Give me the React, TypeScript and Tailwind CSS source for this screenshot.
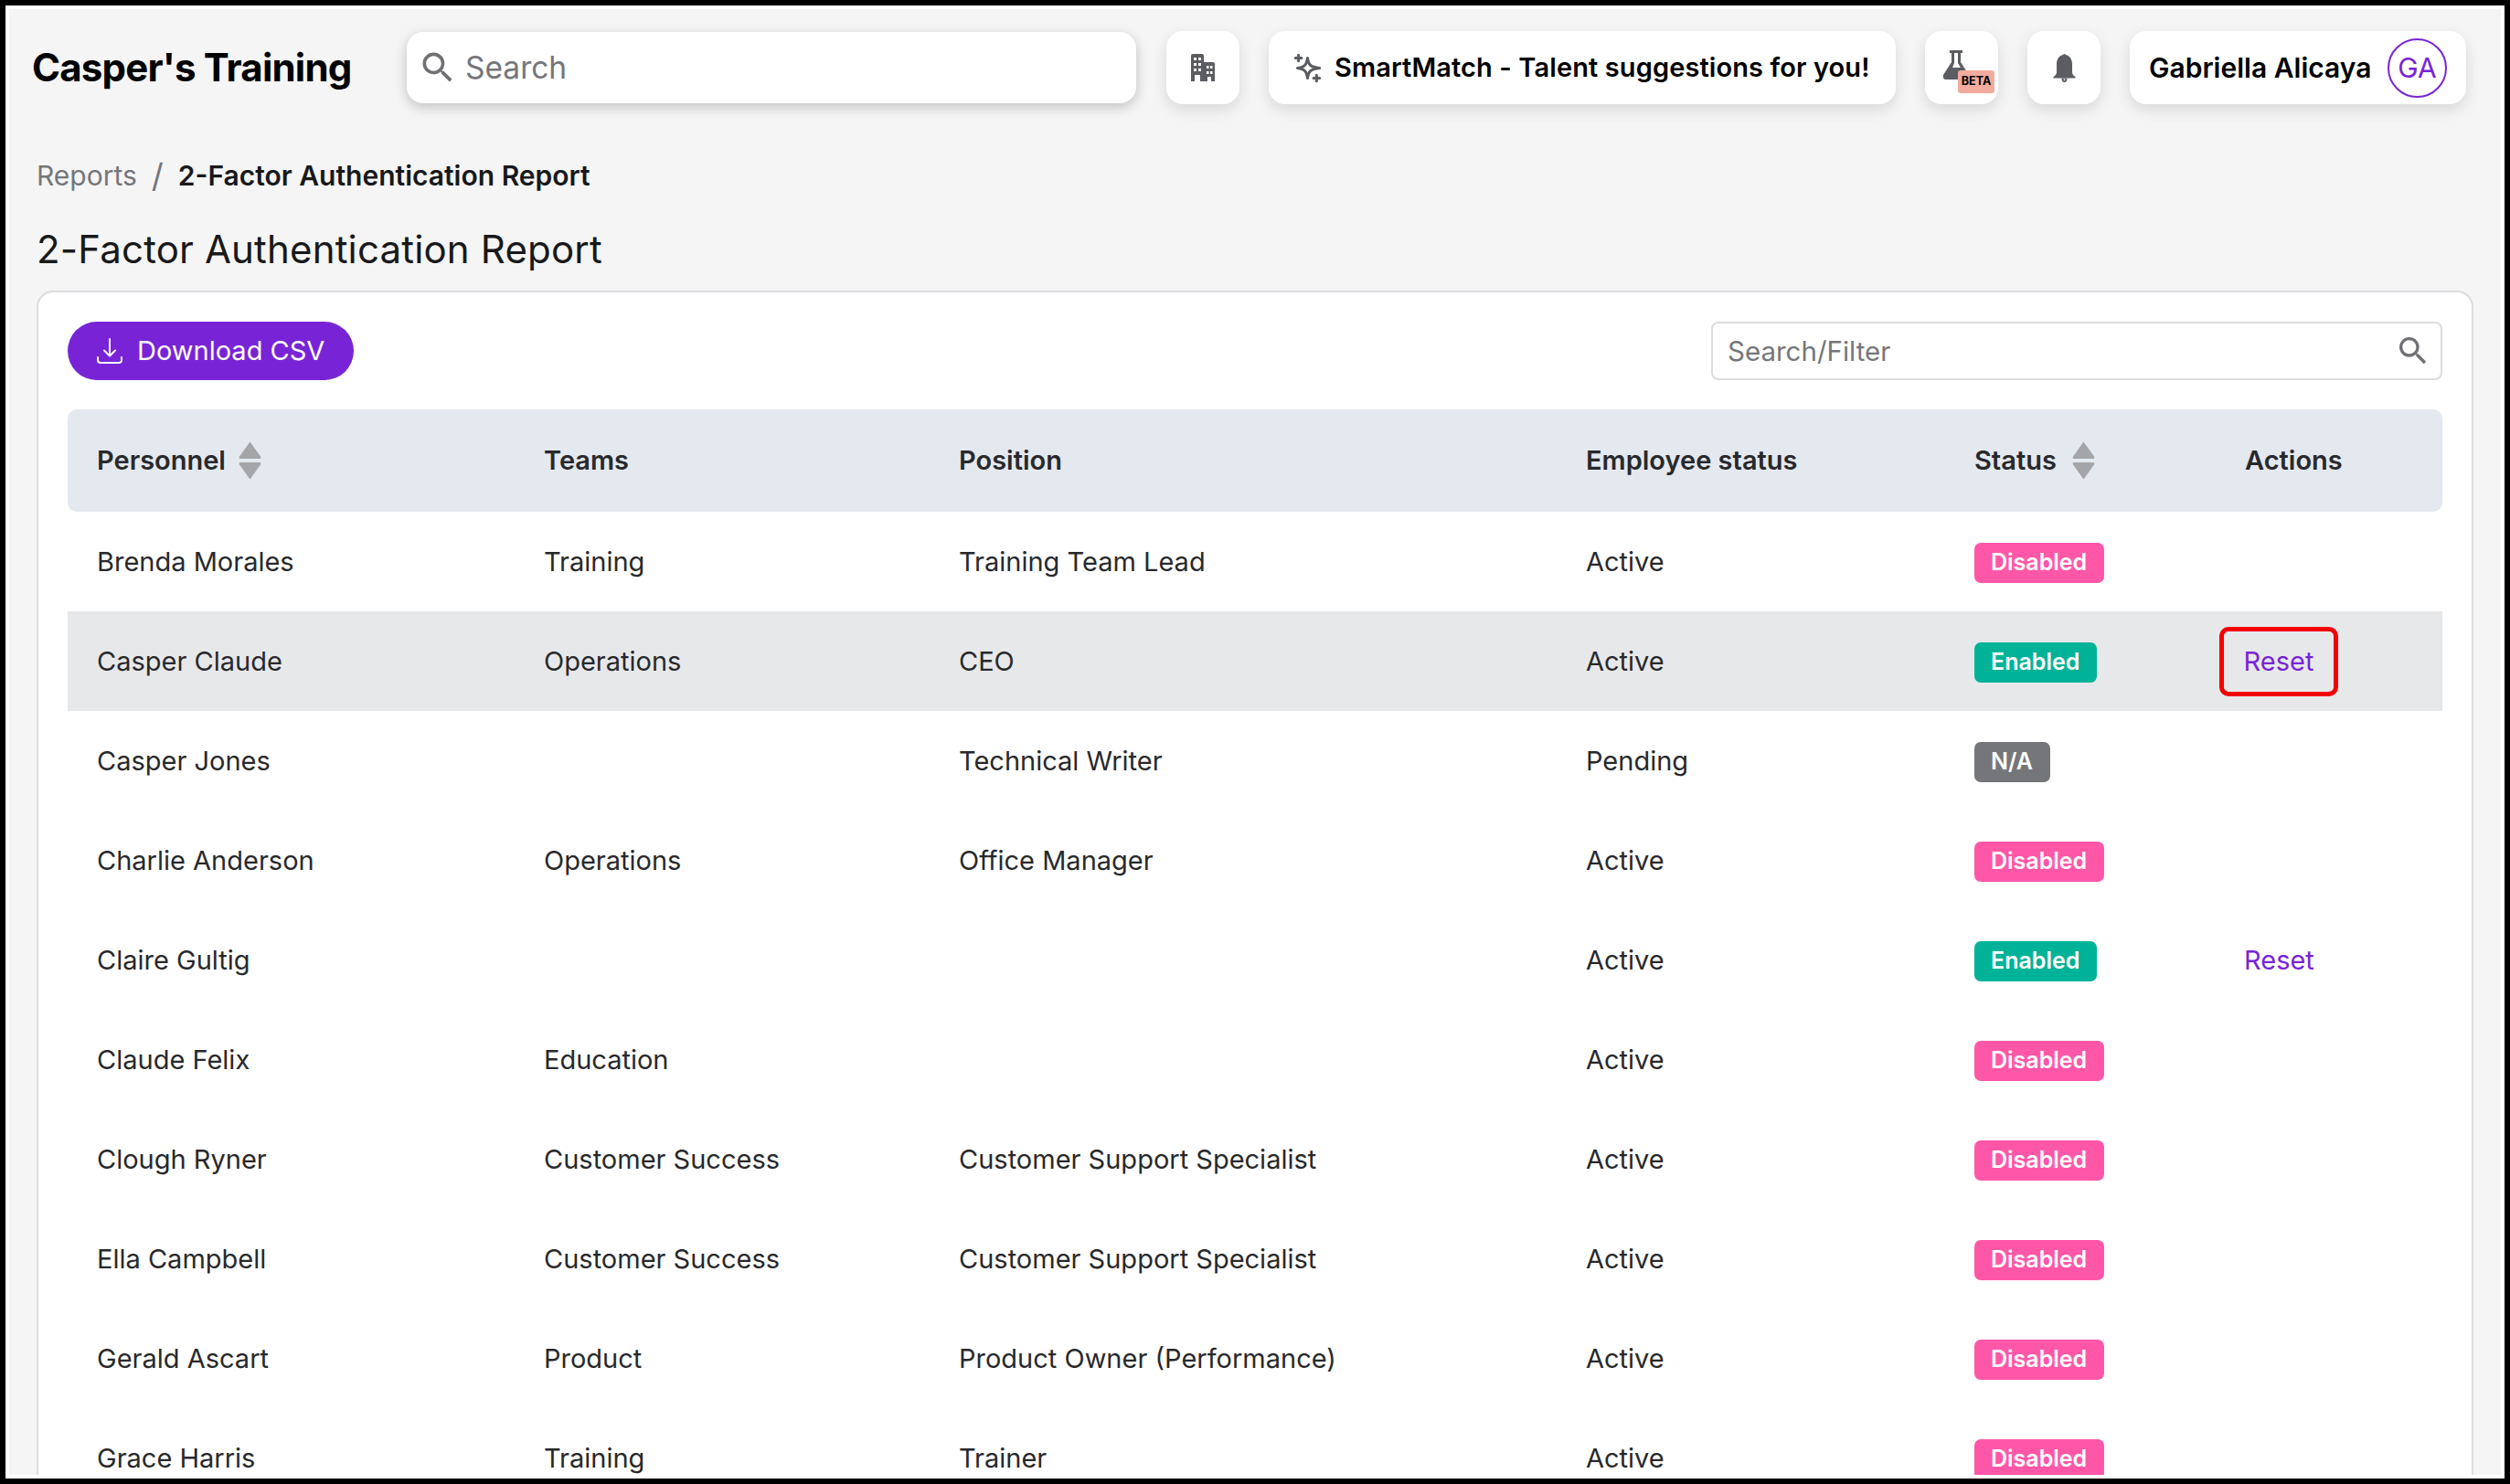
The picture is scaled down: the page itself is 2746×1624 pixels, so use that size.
import React from "react";

type Status = "Disabled" | "Enabled" | "N/A";

interface Person {
  name: string;
  team: string;
  position: string;
  employee: string;
  status: Status;
  highlight?: boolean;
}

const people: Person[] = [
  { name: "Brenda Morales", team: "Training", position: "Training Team Lead", employee: "Active", status: "Disabled" },
  { name: "Casper Claude", team: "Operations", position: "CEO", employee: "Active", status: "Enabled", highlight: true },
  { name: "Casper Jones", team: "", position: "Technical Writer", employee: "Pending", status: "N/A" },
  { name: "Charlie Anderson", team: "Operations", position: "Office Manager", employee: "Active", status: "Disabled" },
  { name: "Claire Gultig", team: "", position: "", employee: "Active", status: "Enabled" },
  { name: "Claude Felix", team: "Education", position: "", employee: "Active", status: "Disabled" },
  { name: "Clough Ryner", team: "Customer Success", position: "Customer Support Specialist", employee: "Active", status: "Disabled" },
  { name: "Ella Campbell", team: "Customer Success", position: "Customer Support Specialist", employee: "Active", status: "Disabled" },
  { name: "Gerald Ascart", team: "Product", position: "Product Owner (Performance)", employee: "Active", status: "Disabled" },
  { name: "Grace Harris", team: "Training", position: "Trainer", employee: "Active", status: "Disabled" },
];

const badgeColor: Record<Status, string> = {
  Disabled: "bg-[#ff57a8]",
  Enabled: "bg-[#00b398]",
  "N/A": "bg-[#75767a]",
};

const SearchIcon = ({ size }: { size: number }) => (
  <svg width={size} height={size} viewBox="0 0 24 24" fill="#6f7174" className="shrink-0">
    <path d="M15.5 14h-.79l-.28-.27A6.471 6.471 0 0 0 16 9.5 6.5 6.5 0 1 0 9.5 16c1.61 0 3.09-.59 4.23-1.57l.27.28v.79l5 4.99L20.49 19l-4.99-5zm-6 0C7.01 14 5 11.99 5 9.5S7.01 5 9.5 5 14 7.01 14 9.5 11.99 14 9.5 14z" />
  </svg>
);

const SortArrows = () => (
  <svg width="25" height="42" viewBox="0 0 25 42" className="shrink-0" fill="#a3a5a9">
    <path d="M12.5 0.5 L24 16.5 Q25 19 23 19 L2 19 Q0 19 1 16.5 Z" />
    <path d="M12.5 41.5 L24 25.5 Q25 23 23 23 L2 23 Q0 23 1 25.5 Z" />
  </svg>
);

const TopButton = ({ children, className }: { children: React.ReactNode; className?: string }) => (
  <div className={`flex h-[80px] shrink-0 items-center rounded-[18px] bg-white shadow-[0_6px_16px_rgba(0,0,0,0.12)] ${className ?? ""}`}>
    {children}
  </div>
);

const Badge = ({ status }: { status: Status }) => (
  <span className={`inline-flex h-[44px] items-center rounded-[7px] pr-[19px] pl-[18px] align-middle text-[25px] font-semibold text-white ${badgeColor[status]}`}>
    {status}
  </span>
);

const App = () => {
  return (
    <div className="h-[1624px] w-[2746px] overflow-hidden bg-black p-[6px] font-['Inter',sans-serif]">
      <div className="h-full bg-white p-[4px]">
        <div className="h-full overflow-hidden bg-[#f5f5f5] px-[30px]">
          <header className="-ml-[5px] flex items-center pt-[24px]">
            <div className="w-[410px] shrink-0 text-[42px] leading-[56px] font-bold tracking-[-0.8px] text-black">Casper's Training</div>
            <div className="flex h-[78px] w-[798px] shrink-0 items-center rounded-[18px] bg-white pl-[12px] shadow-[0_4px_14px_rgba(0,0,0,0.22)]">
              <SearchIcon size={44} />
              <span className="ml-[8px] text-[33.5px] text-[#75767a]">Search</span>
            </div>
            <TopButton className="ml-[33px] w-[80px] justify-center">
              <svg width="28" height="32" viewBox="0 0 28 32" fill="#5b5d62">
                <path d="M1 3 Q1 1 3 1 H13 Q15 1 15 3 V10 H25 Q27 10 27 12 V31 H1 Z" />
                <g fill="#ffffff">
                  <rect x="4" y="5" width="3" height="3" />
                  <rect x="9" y="5" width="3" height="3" />
                  <rect x="4" y="11" width="3" height="3" />
                  <rect x="9" y="11" width="3" height="3" />
                  <rect x="4" y="17" width="3" height="3" />
                  <rect x="9" y="17" width="3" height="3" />
                  <rect x="5" y="24" width="6" height="7" />
                  <rect x="18" y="14" width="2.5" height="3" />
                  <rect x="22" y="14" width="2.5" height="3" />
                  <rect x="18" y="20" width="2.5" height="3" />
                  <rect x="22" y="20" width="2.5" height="3" />
                  <rect x="19" y="26" width="4" height="5" />
                </g>
              </svg>
            </TopButton>
            <TopButton className="ml-[32px] w-[686px] gap-[13px] pl-[26px]">
              <svg width="33" height="33" viewBox="0 0 30 30" fill="none" stroke="#5b5d62" strokeWidth="2.8" strokeLinejoin="round" strokeLinecap="round" className="shrink-0">
                <path d="M15 5 C16 12 18 14 27 15 C18 16 16 18 15 25 C14 18 12 16 5 15 C12 14 14 12 15 5 Z" />
                <path d="M6 2 V8 M3 5 H9 M24 22 V28 M21 25 H27" />
              </svg>
              <span className="text-[29px] font-semibold tracking-[0.1px] text-black">SmartMatch - Talent suggestions for you!</span>
            </TopButton>
            <TopButton className="relative ml-[32px] w-[80px] justify-center">
              <svg width="30" height="34" viewBox="0 0 30 34" fill="#5b5d62" className="-mt-[6px] -ml-[12px]">
                <path d="M8 1 H22 V4 H20 V14 L29 28 Q30 33 26 33 H4 Q0 33 1 28 L10 14 V4 H8 Z" />
                <path d="M13 4 H17 V15 L20 20 H11 L13 15 Z" fill="#ffffff" />
              </svg>
              <span className="absolute top-[43px] left-[36px] flex h-[25px] w-[40px] items-center justify-center rounded-[3px] bg-[#f2ac9e] text-[12.5px] font-bold text-black">BETA</span>
            </TopButton>
            <TopButton className="ml-[32px] w-[80px] justify-center">
              <svg width="25" height="32" viewBox="0 0 24 32" fill="#5b5d62">
                <path d="M10.5 2 Q12 0 13.5 2 C18 3 20.5 7 20.5 12 V21 Q20.5 24 24 26 V27.5 H0 V26 Q3.5 24 3.5 21 V12 C3.5 7 6 3 10.5 2 Z" />
                <path d="M9 27.5 H15 Q15 32 12 32 Q9 32 9 27.5 Z M11 28.5 Q11 30 12 30 Q13 30 13 28.5 Z" fillRule="evenodd" />
              </svg>
            </TopButton>
            <TopButton className="ml-[32px] w-[368px] pl-[21px]">
              <span className="w-[245px] shrink-0 text-[30px] font-semibold whitespace-nowrap text-black">Gabriella Alicaya</span>
              <span className="ml-[16px] flex h-[65px] w-[65px] shrink-0 items-center justify-center rounded-full border-2 border-[#7824d6] text-[30px] text-[#7824d6]">GA</span>
            </TopButton>
          </header>

          <nav className="mt-[58px] flex items-center text-[30px] leading-[40px]">
            <span className="text-[#75767a]">Reports</span>
            <span className="mx-[16px] text-[36px] text-[#75767a]">/</span>
            <span className="font-semibold text-[#18191b]">2-Factor Authentication Report</span>
          </nav>

          <h1 className="mt-[33px] text-[42px] leading-[56px] tracking-[0.17px] text-[#18191b]">2-Factor Authentication Report</h1>

          <section className="mt-[17px] rounded-t-[18px] border-[2px] border-[#dddde1] bg-white px-[32px] pt-[32px]">
            <div className="flex items-center justify-between">
              <button className="flex h-[64px] w-[313px] items-center rounded-full bg-[#7824d6] pl-[32px] text-[29px] text-white">
                <svg width="28" height="28" viewBox="0 0 28 28" fill="none" stroke="currentColor" strokeWidth="2" strokeLinecap="round" strokeLinejoin="round" className="mr-[16px] shrink-0">
                  <path d="M14 1 V19 M8 13.5 L14 19.5 L20 13.5" />
                  <path d="M1 21 V24 Q1 27 4 27 H24 Q27 27 27 24 V21" />
                </svg>
                Download CSV
              </button>
              <div className="flex h-[64px] w-[800px] items-center justify-between rounded-[8px] border-[2px] border-[#dcdcdc] bg-white pr-[10px] pl-[16px]">
                <span className="text-[29.5px] text-[#75767a]">Search/Filter</span>
                <SearchIcon size={40} />
              </div>
            </div>

            <table className="mt-[32px] w-full table-fixed border-collapse text-[29px] text-[#28292c]">
              <colgroup>
                <col className="w-[521px]" />
                <col className="w-[454px]" />
                <col className="w-[686px]" />
                <col className="w-[425px]" />
                <col className="w-[296px]" />
                <col />
              </colgroup>
              <thead>
                <tr className="h-[112px] bg-[#e4e8ef]">
                  <th className="rounded-l-[10px] pl-[32px] text-left font-semibold">
                    <span className="flex items-center gap-[14px]">Personnel <SortArrows /></span>
                  </th>
                  <th className="text-left font-semibold">Teams</th>
                  <th className="text-left font-semibold">Position</th>
                  <th className="text-left font-semibold">Employee status</th>
                  <th className="text-left font-semibold">
                    <span className="flex items-center gap-[17px]">Status <SortArrows /></span>
                  </th>
                  <th className="rounded-r-[10px] text-left font-semibold">Actions</th>
                </tr>
              </thead>
              <tbody>
                {people.map((person) => (
                  <tr key={person.name} className={`h-[109px] ${person.highlight ? "bg-[#e7e8ea]" : ""}`}>
                    <td className="pl-[32px]">{person.name}</td>
                    <td>{person.team}</td>
                    <td>{person.position}</td>
                    <td>{person.employee}</td>
                    <td><Badge status={person.status} /></td>
                    <td>
                      {person.status === "Enabled" && (
                        person.highlight ? (
                          <span className="-ml-[28px] inline-flex h-[76px] w-[130px] items-center justify-center rounded-[10px] border-[5px] border-[#f40000] align-middle text-[#7824d6]">Reset</span>
                        ) : (
                          <span className="-ml-[1px] text-[#7824d6]">Reset</span>
                        )
                      )}
                    </td>
                  </tr>
                ))}
              </tbody>
            </table>
          </section>
        </div>
      </div>
    </div>
  );
};

export default App;
